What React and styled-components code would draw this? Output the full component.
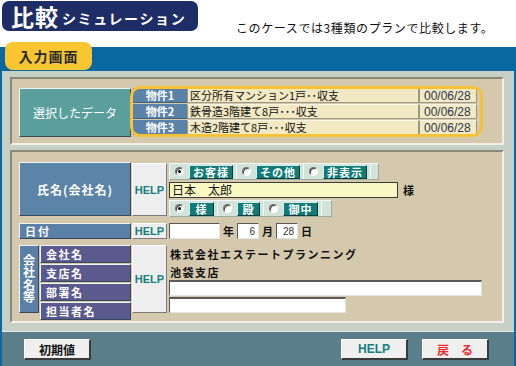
import React from "react";
import styled, { createGlobalStyle } from "styled-components";

const GlobalStyle = createGlobalStyle`
  html, body { margin: 0; padding: 0; background: #fff; }
  body {
    width: 516px; height: 366px; overflow: hidden;
    font-family: "Noto Sans CJK JP", "Liberation Sans", sans-serif;
  }
  * { box-sizing: border-box; }
`;

const Page = styled.div`
  width: 516px;
  height: 366px;
  display: flex;
  flex-direction: column;
`;

const Header = styled.div`
  height: 47px;
  display: flex;
  align-items: flex-start;
  flex-shrink: 0;
`;

const TitlePill = styled.div`
  margin: 1px 0 0 2px;
  width: 196px;
  height: 30px;
  background: #1f2d66;
  border-radius: 7px;
  display: flex;
  align-items: center;
  padding-left: 9px;
  color: #fff;
  font-weight: bold;
`;

const TitleBig = styled.span`
  font-size: 23px;
  line-height: 1;
  letter-spacing: 1px;
`;

const TitleSmall = styled.span`
  font-size: 14px;
  letter-spacing: 1.6px;
  margin: 4px 0 0 3px;
`;

const Intro = styled.div`
  margin: 21px 0 0 38px;
  font-size: 12px;
  line-height: 14px;
  color: #111;
  letter-spacing: 0.6px;
`;

const Window = styled.div`
  height: 319px;
  display: flex;
  flex-direction: column;
  border-left: 2px solid #0a68a0;
  border-right: 2px solid #0a68a0;
`;

const Band = styled.div`
  height: 24px;
  flex-shrink: 0;
  background: #0a68a0;
  display: flex;
  align-items: flex-start;
`;

const Tab = styled.div`
  margin: -5px 0 0 3px;
  width: 87px;
  height: 28px;
  background: #f9c632;
  border-radius: 8px;
  display: flex;
  align-items: center;
  justify-content: center;
  font-size: 14px;
  font-weight: bold;
  color: #2a2a2a;
  letter-spacing: 1px;
`;

const Body = styled.div`
  flex: 1;
  background: #c6d0c6;
  padding: 6px 10px 8px 8px;
  display: flex;
  flex-direction: column;
  gap: 5px;
`;

const Panel = styled.div`
  height: ${(p) => p.$h}px;
  background: #d4c9ad;
  border: 2px solid;
  border-color: #8d8878 #f3efe4 #f3efe4 #8d8878;
  padding: ${(p) => p.$pad};
  display: flex;
  flex-direction: column;
  gap: 6px;
`;

const Row = styled.div`
  display: flex;
  align-items: flex-start;
  height: ${(p) => p.$h}px;
`;

const Label = styled.div`
  width: ${(p) => p.$w || 112}px;
  height: ${(p) => p.$h}px;
  flex-shrink: 0;
  background: ${(p) => p.$bg};
  border: 1px solid;
  border-color: #eef3f4 #34495a #34495a #eef3f4;
  color: #fff;
  font-size: ${(p) => p.$fs || 11}px;
  font-weight: ${(p) => (p.$normal ? "normal" : "bold")};
  letter-spacing: ${(p) => p.$ls ?? 1}px;
  display: flex;
  align-items: center;
  justify-content: ${(p) => (p.$left ? "flex-start" : "center")};
  padding-left: ${(p) => (p.$left ? 5 : 0)}px;
  white-space: nowrap;
`;

const VLabel = styled(Label)`
  writing-mode: vertical-rl;
  font-size: 12px;
  letter-spacing: 0.5px;
  padding: 0;
`;

const Plans = styled.div`
  position: relative;
  flex: 1;
  margin-left: 2px;
  margin-right: 18px;
  display: flex;
  flex-direction: column;
  gap: 1px;
  &::after {
    content: "";
    position: absolute;
    top: -2px;
    bottom: -2px;
    left: -3px;
    right: -6px;
    border: 3px solid #f7c235;
    border-radius: 10px;
    pointer-events: none;
  }
`;

const PlanRow = styled.div`
  display: flex;
  height: 15px;
`;

const PlanLabel = styled.div`
  width: 54px;
  background: #5b82a9;
  color: #fff;
  font-size: 11px;
  font-weight: bold;
  display: flex;
  align-items: center;
  justify-content: center;
  border-bottom: 1px solid #3e5f80;
`;

const Cell = styled.div`
  flex: ${(p) => (p.$w ? "none" : 1)};
  width: ${(p) => (p.$w ? p.$w + "px" : "auto")};
  background: #f2e9c2;
  border: 1px solid;
  border-color: #fbf7e6 #9a968a #9a968a #9a968a;
  font-size: ${(p) => (p.$date ? 12 : 11)}px;
  font-family: ${(p) =>
    p.$date ? '"Liberation Sans", sans-serif' : '"Noto Sans CJK JP", sans-serif'};
  color: ${(p) => (p.$date ? "#2a3654" : "#111")};
  padding-left: ${(p) => (p.$date ? 4 : 2)}px;
  display: flex;
  align-items: center;
  line-height: 1;
  white-space: nowrap;
  overflow: hidden;
`;

const Help = styled.div`
  width: 35px;
  height: ${(p) => p.$h}px;
  margin: ${(p) => p.$mt || 0}px 0 0 1px;
  flex-shrink: 0;
  background: #eeeeee;
  border: 1px solid;
  border-color: #ffffff #7c7c7c #7c7c7c #ffffff;
  color: #14807c;
  font-family: "Liberation Sans", sans-serif;
  font-weight: bold;
  font-size: 11px;
  display: flex;
  align-items: center;
  justify-content: center;
`;

const Content = styled.div`
  margin: ${(p) => p.$mt || 0}px 0 0 2px;
  display: flex;
  flex-direction: ${(p) => (p.$row ? "row" : "column")};
  align-items: ${(p) => (p.$row ? "center" : "flex-start")};
  gap: ${(p) => p.$gap || 0}px;
`;

const RadioRow = styled.div`
  display: flex;
  height: 17px;
  background: #d2e3da;
  padding-right: ${(p) => p.$pr}px;
  border: 1px solid;
  border-color: #f4f9f6 #98aaa2 #98aaa2 #f4f9f6;
`;

const RadioItem = styled.div`
  display: flex;
  align-items: center;
  gap: 5px;
  padding: 0 3px 0 5px;
  border-right: 1px solid #f4f9f6;
`;

const Radio = styled.span`
  position: relative;
  width: 9px;
  height: 9px;
  border-radius: 50%;
  background: #fff;
  border: 1px solid;
  border-color: #6e6e6e #ffffff #ffffff #6e6e6e;
  box-shadow: inset 1px 1px 0 #404040;
  &::after {
    content: "";
    display: ${(p) => (p.$on ? "block" : "none")};
    position: absolute;
    left: 2px;
    top: 2px;
    width: 3px;
    height: 3px;
    border-radius: 50%;
    background: #000;
  }
`;

const RadioLabel = styled.span`
  width: ${(p) => p.$w}px;
  height: 14px;
  background: #107b78;
  color: #fff;
  font-size: 11px;
  font-weight: bold;
  letter-spacing: 1px;
  display: flex;
  align-items: center;
  justify-content: center;
  border: 1px solid;
  border-color: #d8eee8 #0a3c3a #0a3c3a #d8eee8;
`;

const NameLine = styled.div`
  display: flex;
  align-items: center;
  gap: 5px;
  height: 16px;
`;

const NameInput = styled.div`
  width: 229px;
  height: 16px;
  background: #f8f8c2;
  border: 1px solid #3a3a3a;
  font-size: 12px;
  line-height: 14px;
  padding-left: 2px;
  color: #111;
`;

const Unit = styled.span`
  font-size: 11px;
  font-weight: bold;
  color: #111;
  margin: 0 ${(p) => p.$m ?? 0}px;
`;

const Box = styled.div`
  width: ${(p) => p.$w}px;
  height: 16px;
  margin-top: ${(p) => p.$mt || 0}px;
  background: #fff;
  border: 1px solid;
  border-color: #5a5a5a #e4e4e4 #e4e4e4 #5a5a5a;
  border-top-width: ${(p) => (p.$thick ? 2 : 1)}px;
  font-family: "Liberation Sans", sans-serif;
  font-size: 10px;
  color: #333;
  display: flex;
  align-items: center;
  justify-content: flex-end;
  padding-right: 3px;
`;

const LabelGroup = styled.div`
  display: flex;
  gap: 1px;
  width: 112px;
  height: 68px;
`;

const SubCol = styled.div`
  flex: 1;
  display: flex;
  flex-direction: column;
  gap: 1px;
`;

const SubLabel = styled(Label)`
  width: auto;
  height: auto;
  flex: 1;
  letter-spacing: 1.5px;
`;

const Info = styled.div`
  height: ${(p) => p.$h}px;
  display: flex;
  align-items: center;
  font-size: 11px;
  font-weight: bold;
  letter-spacing: 1.5px;
  color: #111;
  padding-left: 1px;
`;

const Footer = styled.div`
  height: 35px;
  flex-shrink: 0;
  background: #5a7f8b;
  border-top: 1px solid #e6ece6;
  display: flex;
  align-items: flex-start;
  gap: 14px;
  padding: 7px 25px 0 22px;
`;

const Button = styled.div`
  width: 67px;
  height: 21px;
  margin-left: ${(p) => (p.$push ? "auto" : "0")};
  background: #efefef;
  border-style: solid;
  border-width: 1px 2px 2px 1px;
  border-color: #ffffff #3a3a3a #3a3a3a #ffffff;
  color: ${(p) => p.$color};
  font-family: ${(p) =>
    p.$latin ? '"Liberation Sans", sans-serif' : '"Noto Sans CJK JP", sans-serif'};
  font-size: 12px;
  font-weight: bold;
  display: flex;
  align-items: center;
  justify-content: center;
  white-space: pre;
`;

const plans = [
  { n: "物件1", t: "区分所有マンション1戸･･収支" },
  { n: "物件2", t: "鉄骨造3階建て8戸･･･収支" },
  { n: "物件3", t: "木造2階建て8戸･･･収支" },
];

export default function App() {
  return (
    <>
      <GlobalStyle />
      <Page>
        <Header>
          <TitlePill>
            <TitleBig>比較</TitleBig>
            <TitleSmall>シミュレーション</TitleSmall>
          </TitlePill>
          <Intro>このケースでは3種類のプランで比較します。</Intro>
        </Header>
        <Window>
          <Band>
            <Tab>入力画面</Tab>
          </Band>
          <Body>
            <Panel $h={68} $pad="9px 7px 6px 7px">
              <Row $h={49}>
                <Label $h={49} $bg="#5a9f9b" $normal $fs={12} $ls={0}>
                  選択したデータ
                </Label>
                <Plans>
                  {plans.map((p) => (
                    <PlanRow key={p.n}>
                      <PlanLabel>{p.n}</PlanLabel>
                      <Cell>{p.t}</Cell>
                      <Cell $w={58} $date>
                        00/06/28
                      </Cell>
                    </PlanRow>
                  ))}
                </Plans>
              </Row>
            </Panel>
            <Panel $h={173} $pad="10px 7px 9px 7px">
              <Row $h={55}>
                <Label $h={54} $bg="#5b84a6" $fs={12}>
                  氏名(会社名)
                </Label>
                <Help $h={53} $mt={1}>HELP</Help>
                <Content $mt={1} $gap={2}>
                  <RadioRow $pr={7}>
                    <RadioItem>
                      <Radio $on />
                      <RadioLabel $w={44}>お客様</RadioLabel>
                    </RadioItem>
                    <RadioItem>
                      <Radio />
                      <RadioLabel $w={44}>その他</RadioLabel>
                    </RadioItem>
                    <RadioItem>
                      <Radio />
                      <RadioLabel $w={44}>非表示</RadioLabel>
                    </RadioItem>
                  </RadioRow>
                  <NameLine>
                    <NameInput>日本　太郎</NameInput>
                    <Unit>様</Unit>
                  </NameLine>
                  <RadioRow $pr={9}>
                    <RadioItem>
                      <Radio $on />
                      <RadioLabel $w={25}>様</RadioLabel>
                    </RadioItem>
                    <RadioItem>
                      <Radio />
                      <RadioLabel $w={23}>殿</RadioLabel>
                    </RadioItem>
                    <RadioItem>
                      <Radio />
                      <RadioLabel $w={35}>御中</RadioLabel>
                    </RadioItem>
                  </RadioRow>
                </Content>
              </Row>
              <Row $h={16}>
                <Label $h={16} $bg="#5a80a8" $left $ls={2}>
                  日付
                </Label>
                <Help $h={16}>HELP</Help>
                <Content $row>
                  <Box $w={51} />
                  <Unit $m={3}>年</Unit>
                  <Box $w={22}>6</Box>
                  <Unit $m={3}>月</Unit>
                  <Box $w={22}>28</Box>
                  <Unit $m={3}>日</Unit>
                </Content>
              </Row>
              <Row $h={68}>
                <LabelGroup>
                  <VLabel $w={20} $h={68} $bg="#5a80a8">
                    会社名等
                  </VLabel>
                  <SubCol>
                    <SubLabel $bg="#5b5a8f" $left>会社名</SubLabel>
                    <SubLabel $bg="#5b5a8f" $left>支店名</SubLabel>
                    <SubLabel $bg="#5b5a8f" $left>部署名</SubLabel>
                    <SubLabel $bg="#5b5a8f" $left>担当者名</SubLabel>
                  </SubCol>
                </LabelGroup>
                <Help $h={68}>HELP</Help>
                <Content>
                  <Info $h={18}>株式会社エステートプランニング</Info>
                  <Info $h={17}>池袋支店</Info>
                  <Box $w={313} $thick />
                  <Box $w={177} $mt={1} $thick />
                </Content>
              </Row>
            </Panel>
          </Body>
          <Footer>
            <Button $color="#111">初期値</Button>
            <Button $color="#14807c" $latin $push>
              HELP
            </Button>
            <Button $color="#f02828">{"戻　る"}</Button>
          </Footer>
        </Window>
      </Page>
    </>
  );
}
